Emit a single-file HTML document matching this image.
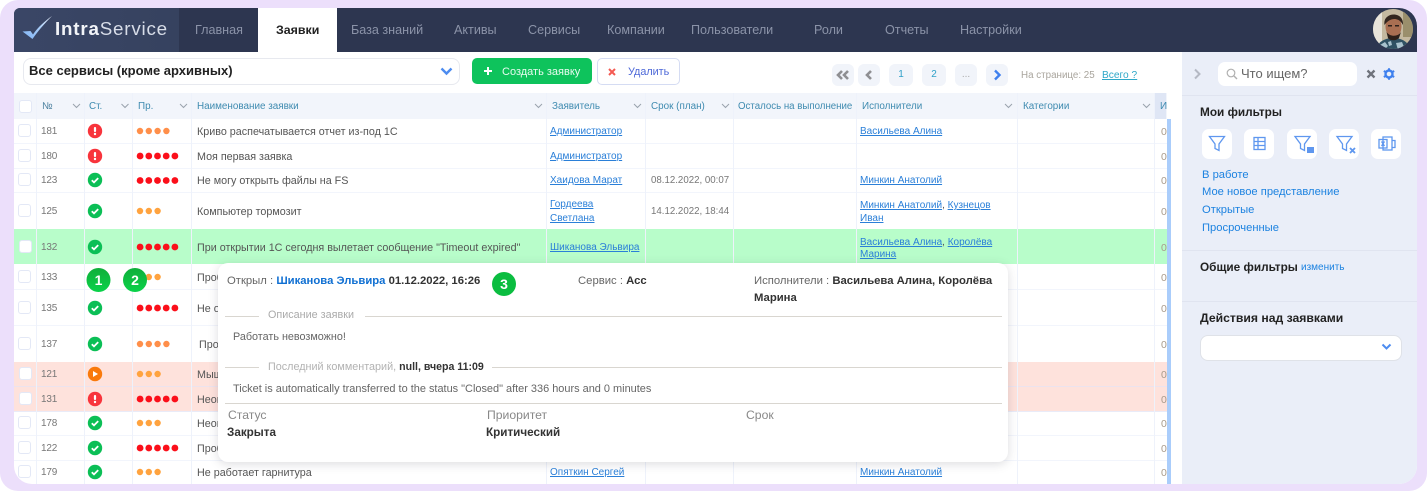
<!DOCTYPE html>
<html lang="ru"><head><meta charset="utf-8"><title>IntraService</title>
<style>
html,body{margin:0;padding:0;width:1427px;height:491px;overflow:hidden;background:#fff}
body{font-family:"Liberation Sans","Noto Sans CJK SC",sans-serif;color:#555}
#outer{position:absolute;left:0;top:0;width:1427px;height:491px;background:#ecdffb;border-radius:18px}
#app{position:absolute;left:14px;top:8px;width:1403px;height:476px;background:#fff;border-radius:6px 18px 18px 18px;overflow:hidden}
#p{position:absolute;left:-14px;top:-8px;width:1427px;height:491px}
.b{position:absolute}
.t{position:absolute;white-space:nowrap;line-height:14px;font-size:10.75px;color:#555;margin-top:1px}
.n{color:#8b93a8;font-size:12.6px;margin-top:0}
.h{color:#3f8bb0;font-size:9.9px;margin-top:1.5px}
.a{color:#2a7fd8;text-decoration:underline;font-size:10px}
.d{color:#777;font-size:9.7px}
.num{color:#777;font-size:10px;letter-spacing:-.2px}
.z{color:#a89a8a;font-size:10.5px}
.hd{color:#222;font-weight:bold;font-size:12.2px;margin-top:0}
.l{color:#1c82e0;font-size:11.2px}
.pg{position:absolute;top:64px;height:22px;background:#f1f4fa;border-radius:6px;text-align:center;line-height:22px;font-size:10px;color:#2fa0c8}
.fb{position:absolute;top:129px;width:30px;height:30px;background:#fff;border-radius:7px}
.ln{position:absolute;background:#d9d6d0;height:1px}
.pt{position:absolute;white-space:nowrap;line-height:16px;color:#666;font-size:11.3px}
.pt b{color:#333}
.cb{position:absolute;left:18px;width:11px;height:11px;border:1px solid #e3e8f6;border-radius:3px;background:#fff}
</style></head><body>
<div id="outer"></div>
<div id="app"><div id="p">

<!-- header -->
<div class="b" style="left:14px;top:8px;width:1403px;height:44px;background:#2d3650"></div>
<div class="b" style="left:14px;top:8px;width:165px;height:44px;background:linear-gradient(90deg,#3a4666,#36425f)"></div>
<svg class="b" style="left:20px;top:14px" width="36" height="28" viewBox="0 0 36 28"><defs><linearGradient id="g1" x1="0" y1="1" x2="1" y2="0"><stop offset="0" stop-color="#7fb3f5"/><stop offset=".55" stop-color="#a9cdf7"/><stop offset="1" stop-color="#f2f6ff"/></linearGradient></defs><path d="M2.5 17.5 L10.5 17 L13 20.5 C18 13 25 7 32 2 C25 9 18 17 12.5 25 Z" fill="url(#g1)"/></svg>
<div class="t" style="left:55px;top:19px;margin-top:0;line-height:20px;font-size:18.8px;color:#f2f4f8;letter-spacing:.8px"><b>Intra</b><span style="color:#d8dde8">Service</span></div>
<div class="b" style="left:258px;top:8px;width:79px;height:44px;background:#fff"></div>
<div class="t n" style="left:195px;top:23px">Главная</div>
<div class="t" style="left:276px;top:23px;margin-top:0;font-size:12.4px;font-weight:bold;color:#222">Заявки</div>
<div class="t n" style="left:351px;top:23px">База знаний</div>
<div class="t n" style="left:454px;top:23px">Активы</div>
<div class="t n" style="left:528px;top:23px">Сервисы</div>
<div class="t n" style="left:607px;top:23px">Компании</div>
<div class="t n" style="left:691px;top:23px">Пользователи</div>
<div class="t n" style="left:814px;top:23px">Роли</div>
<div class="t n" style="left:885px;top:23px">Отчеты</div>
<div class="t n" style="left:960px;top:23px">Настройки</div>
<svg class="b" style="left:1372px;top:9px" width="42" height="42" viewBox="0 0 42 42"><defs><clipPath id="av"><circle cx="21" cy="20" r="20"/></clipPath></defs><g clip-path="url(#av)"><rect width="42" height="42" fill="#c4b9a0"/><rect x="0" width="10" height="42" fill="#e8e4da"/><rect x="31" width="11" height="28" fill="#9a8f6c"/><path d="M3 42 C5 33 13 29 21 29 C30 29 37 33 39 42 Z" fill="#2f5163"/><path d="M8 36 l5 -3 l3 4 l-4 4z M24 34 l6 -1 l2 5 l-6 3z M16 33 l3 -1 l1 4 l-3 1z" fill="#a9c2cd"/><ellipse cx="21.500" cy="17.500" rx="8" ry="11" fill="#a96f52"/><path d="M12.500 16 C10 3 32 1 31 16 C27 8 18 8 12.500 16 Z" fill="#33261f"/><path d="M14.500 23 C18 28 26 28 29 23 L27 29 C24 32 18 32 16 29 Z" fill="#2e211b"/><rect x="16" y="16" width="4" height="1.500" fill="#2e211b"/><rect x="23" y="16" width="4" height="1.500" fill="#2e211b"/></g></svg>

<!-- toolbar -->
<div class="b" style="left:23px;top:58px;width:435px;height:25px;border:1px solid #e7e9ef;border-radius:8px;background:#fff"></div>
<div class="t" style="left:29px;top:63px;font-size:13px;font-weight:bold;color:#222">Все сервисы (кроме архивных)</div>
<svg class="b" style="left:440px;top:67px" width="13" height="9" viewBox="0 0 13 9"><path d="M1.500 1.500 L6.500 6.500 L11.500 1.500" fill="none" stroke="#4d8cf0" stroke-width="2.400"/></svg>
<div class="b" style="left:472px;top:58px;width:120px;height:26px;background:#0ec35c;border-radius:5px"></div>
<svg class="b" style="left:483px;top:66px" width="10" height="10"><path d="M5 1 V9 M1 5 H9" stroke="#fff" stroke-width="2"/></svg>
<div class="t" style="left:502px;top:64px;font-size:11px;color:#e8fbef">Создать заявку</div>
<div class="b" style="left:597px;top:58px;width:81px;height:25px;background:#fff;border:1px solid #d5dcf3;border-radius:5px"></div>
<svg class="b" style="left:608px;top:68px" width="8" height="8"><path d="M1 1 L7 7 M7 1 L1 7" stroke="#f45a52" stroke-width="2"/></svg>
<div class="t" style="left:628px;top:64px;font-size:10.800px;color:#4d68d8">Удалить</div>
<div class="pg" style="left:832px;width:22px"><svg style="position:absolute;left:4px;top:6px" width="14" height="10"><path d="M6 1 L2 5 L6 9 M12 1 L8 5 L12 9" fill="none" stroke="#8f8f92" stroke-width="2.600"/></svg></div>
<div class="pg" style="left:858px;width:22px"><svg style="position:absolute;left:7px;top:6px" width="8" height="10"><path d="M6 1 L2 5 L6 9" fill="none" stroke="#8f8f92" stroke-width="2.600"/></svg></div>
<div class="pg" style="left:889px;width:24px">1</div>
<div class="pg" style="left:922px;width:24px">2</div>
<div class="pg" style="left:955px;width:22px;color:#aaa">...</div>
<div class="pg" style="left:986px;width:22px"><svg style="position:absolute;left:7px;top:5px" width="9" height="12"><path d="M2 1.500 L6.500 6 L2 10.500" fill="none" stroke="#3f80ee" stroke-width="2.400"/></svg></div>
<div class="t" style="left:1021px;top:68px;font-size:9.800px;color:#a9a59d">На странице: 25</div>
<div class="t" style="left:1102px;top:68px;font-size:10.200px;color:#2fa8c8;text-decoration:underline">Всего ?</div>

<!-- table background -->
<div class="b" style="left:14px;top:93px;width:1153px;height:26px;background:#f2f5fb"></div>
<div class="b" style="left:1155px;top:93px;width:11px;height:26px;background:#dfe6f5"></div>
<div class="b" style="left:14px;top:229px;width:1153px;height:35px;background:#b8fdca"></div>
<div class="b" style="left:14px;top:362px;width:1153px;height:49px;background:#fee2dc"></div>
<!-- row lines -->
<div class="b" style="left:14px;top:143px;width:1153px;height:1px;background:#f2f5fc"></div>
<div class="b" style="left:14px;top:168px;width:1153px;height:1px;background:#f2f5fc"></div>
<div class="b" style="left:14px;top:192px;width:1153px;height:1px;background:#f2f5fc"></div>
<div class="b" style="left:14px;top:289px;width:1153px;height:1px;background:#f2f5fc"></div>
<div class="b" style="left:14px;top:325px;width:1153px;height:1px;background:#f2f5fc"></div>
<div class="b" style="left:14px;top:386px;width:1153px;height:1px;background:#ece3ee"></div>
<div class="b" style="left:14px;top:411px;width:1153px;height:1px;background:#e9ebf8"></div>
<div class="b" style="left:14px;top:435px;width:1153px;height:1px;background:#f2f5fc"></div>
<div class="b" style="left:14px;top:460px;width:1153px;height:1px;background:#f2f5fc"></div>
<!-- col lines -->
<div class="b" style="left:36px;top:93px;width:1px;height:391px;background:#eef2fb"></div>
<div class="b" style="left:84px;top:93px;width:1px;height:391px;background:#eef2fb"></div>
<div class="b" style="left:132px;top:93px;width:1px;height:391px;background:#eef2fb"></div>
<div class="b" style="left:191px;top:93px;width:1px;height:391px;background:#eef2fb"></div>
<div class="b" style="left:546px;top:93px;width:1px;height:391px;background:#eef2fb"></div>
<div class="b" style="left:645px;top:93px;width:1px;height:391px;background:#eef2fb"></div>
<div class="b" style="left:733px;top:93px;width:1px;height:391px;background:#eef2fb"></div>
<div class="b" style="left:856px;top:93px;width:1px;height:391px;background:#eef2fb"></div>
<div class="b" style="left:1017px;top:93px;width:1px;height:391px;background:#eef2fb"></div>
<div class="b" style="left:1154px;top:93px;width:1px;height:391px;background:#eef2fb"></div>
<!-- scrollbar -->
<div class="b" style="left:1167px;top:119px;width:4px;height:365px;background:#aacdfb"></div>

<!-- header cells -->
<div class="cb" style="top:100px;left:19px"></div>
<div class="t h" style="left:42px;top:98px;color:#4a7f9e">№</div>
<div class="t h" style="left:89px;top:98px">Ст.</div>
<div class="t h" style="left:138px;top:98px">Пр.</div>
<div class="t h" style="left:197px;top:98px">Наименование заявки</div>
<div class="t h" style="left:552px;top:98px">Заявитель</div>
<div class="t h" style="left:651px;top:98px">Срок (план)</div>
<div class="t h" style="left:738px;top:98px;font-size:9.700px">Осталось на выполнение</div>
<div class="t h" style="left:862px;top:98px">Исполнители</div>
<div class="t h" style="left:1023px;top:98px">Категории</div>
<div class="t h" style="left:1160px;top:98px">И</div>
<svg class="b" style="left:0;top:100px" width="1160" height="12" fill="none" stroke="#9aa3ad" stroke-width="1"><path d="M73 4 l3.500 3.500 l3.500 -3.500 M121.500 4 l3.500 3.500 l3.500 -3.500 M180 4 l3.500 3.500 l3.500 -3.500 M535 4 l3.500 3.500 l3.500 -3.500 M634 4 l3.500 3.500 l3.500 -3.500 M722 4 l3.500 3.500 l3.500 -3.500 M1005 4 l3.500 3.500 l3.500 -3.500 M1143 4 l3.500 3.500 l3.500 -3.500"/></svg>

<!-- checkboxes -->
<div class="cb" style="top:124px"></div>
<div class="cb" style="top:149px"></div>
<div class="cb" style="top:173px"></div>
<div class="cb" style="top:204px"></div>
<div class="cb" style="top:240px;left:19px"></div>
<div class="cb" style="top:270px"></div>
<div class="cb" style="top:301px"></div>
<div class="cb" style="top:337px"></div>
<div class="cb" style="top:367px;left:19px"></div>
<div class="cb" style="top:392px;left:19px"></div>
<div class="cb" style="top:416px"></div>
<div class="cb" style="top:441px"></div>
<div class="cb" style="top:465px"></div>

<!-- numbers -->
<div class="t num" style="left:41px;top:124px">181</div>
<div class="t num" style="left:41px;top:149px">180</div>
<div class="t num" style="left:41px;top:173px">123</div>
<div class="t num" style="left:41px;top:204px">125</div>
<div class="t num" style="left:41px;top:240px">132</div>
<div class="t num" style="left:41px;top:270px">133</div>
<div class="t num" style="left:41px;top:301px">135</div>
<div class="t num" style="left:41px;top:337px">137</div>
<div class="t num" style="left:41px;top:367px">121</div>
<div class="t num" style="left:41px;top:392px">131</div>
<div class="t num" style="left:41px;top:416px">178</div>
<div class="t num" style="left:41px;top:441px">122</div>
<div class="t num" style="left:41px;top:465px">179</div>

<!-- status + priority icons -->
<svg class="b" style="left:0;top:0" width="200" height="491">
<defs>
<g id="ok"><circle r="7.200" fill="#0bbf56"/><path d="M-3.200 .2 L-1 2.400 L3.200 -1.900" fill="none" stroke="#fff" stroke-width="1.800"/></g>
<g id="er"><circle r="7.200" fill="#f8343c"/><rect x="-1.100" y="-4" width="2.200" height="5" rx="1" fill="#fff"/><circle cy="3" r="1.200" fill="#fff"/></g>
<g id="pl"><circle r="7.200" fill="#f97a0c"/><path d="M-2 -3 L3 0 L-2 3 Z" fill="#fff"/></g>
<g id="r5" fill="#fb0f1a"><circle cx="140.100" r="3.400"/><circle cx="148.800" r="3.400"/><circle cx="157.500" r="3.400"/><circle cx="166.200" r="3.400"/><circle cx="174.900" r="3.400"/></g>
<g id="o4" fill="#ff8f4a"><circle cx="140" r="3.200"/><circle cx="148.800" r="3.200"/><circle cx="157.600" r="3.200"/><circle cx="166.400" r="3.200"/></g>
<g id="o3" fill="#ffa33f"><circle cx="140" r="3.200"/><circle cx="148.800" r="3.200"/><circle cx="157.600" r="3.200"/></g>
</defs>
<use href="#er" x="95" y="131"/><use href="#er" x="95" y="156"/><use href="#ok" x="95" y="180"/><use href="#ok" x="95" y="211"/><use href="#ok" x="95" y="247"/><use href="#ok" x="95" y="308"/><use href="#ok" x="95" y="344"/><use href="#pl" x="95" y="374"/><use href="#er" x="95" y="399"/><use href="#ok" x="95" y="423"/><use href="#ok" x="95" y="448"/><use href="#ok" x="95" y="472"/>
<use href="#o4" y="131"/><use href="#r5" y="156"/><use href="#r5" y="180.500"/><use href="#o3" y="211"/><use href="#r5" y="247"/><use href="#o3" y="277"/><use href="#r5" y="308"/><use href="#o4" y="344"/><use href="#o3" y="374"/><use href="#r5" y="399"/><use href="#o3" y="423"/><use href="#r5" y="448"/><use href="#o3" y="472"/>
</svg>

<!-- names -->
<div class="t" style="left:197px;top:124px">Криво распечатывается отчет из-под 1С</div>
<div class="t" style="left:197px;top:149px">Моя первая заявка</div>
<div class="t" style="left:197px;top:173px">Не могу открыть файлы на FS</div>
<div class="t" style="left:197px;top:204px">Компьютер тормозит</div>
<div class="t" style="left:197px;top:240px">При открытии 1С сегодня вылетает сообщение "Timeout expired"</div>
<div class="t" style="left:197px;top:270px">Проблема</div>
<div class="t" style="left:197px;top:301px">Не открывается</div>
<div class="t" style="left:199px;top:337px">Проблема</div>
<div class="t" style="left:197px;top:367px">Мышка</div>
<div class="t" style="left:197px;top:392px">Неопознанная</div>
<div class="t" style="left:197px;top:416px">Неопознанная</div>
<div class="t" style="left:197px;top:441px">Проблема</div>
<div class="t" style="left:197px;top:465px">Не работает гарнитура</div>

<!-- applicants -->
<div class="t a" style="left:550px;top:124px">Администратор</div>
<div class="t a" style="left:550px;top:149px">Администратор</div>
<div class="t a" style="left:550px;top:173px">Хаидова Марат</div>
<div class="t a" style="left:550px;top:197px">Гордеева</div>
<div class="t a" style="left:550px;top:211px">Светлана</div>
<div class="t a" style="left:550px;top:240px">Шиканова Эльвира</div>
<div class="t a" style="left:550px;top:465px">Опяткин Сергей</div>

<!-- dates -->
<div class="t d" style="left:651px;top:173px">08.12.2022, 00:07</div>
<div class="t d" style="left:651px;top:204px">14.12.2022, 18:44</div>

<!-- performers -->
<div class="t a" style="left:860px;top:124px">Васильева Алина</div>
<div class="t a" style="left:860px;top:173px">Минкин Анатолий</div>
<div class="t" style="left:860px;top:197px"><span class="a">Минкин Анатолий</span><span style="font-size:10px">, </span><span class="a">Кузнецов</span></div>
<div class="t a" style="left:860px;top:211px">Иван</div>
<div class="t" style="left:860px;top:234px"><span class="a">Васильева Алина</span><span style="font-size:10px">, </span><span class="a">Королёва</span></div>
<div class="t a" style="left:860px;top:247px">Марина</div>
<div class="t a" style="left:860px;top:465px">Минкин Анатолий</div>

<!-- last col -->
<div class="t z" style="left:1161px;top:124px">0</div>
<div class="t z" style="left:1161px;top:149px">0</div>
<div class="t z" style="left:1161px;top:173px">0</div>
<div class="t z" style="left:1161px;top:204px">0</div>
<div class="t z" style="left:1161px;top:240px">0</div>
<div class="t z" style="left:1161px;top:270px">0</div>
<div class="t z" style="left:1161px;top:301px">0</div>
<div class="t z" style="left:1161px;top:337px">0</div>
<div class="t z" style="left:1161px;top:367px">0</div>
<div class="t z" style="left:1161px;top:392px">0</div>
<div class="t z" style="left:1161px;top:416px">0</div>
<div class="t z" style="left:1161px;top:441px">0</div>
<div class="t z" style="left:1161px;top:465px">0</div>

<!-- sidebar -->
<div class="b" style="left:1182px;top:52px;width:235px;height:432px;background:#eaeef8"></div>
<div class="b" style="left:1182px;top:95px;width:235px;height:1px;background:#e0e4f0"></div>
<div class="b" style="left:1182px;top:250px;width:235px;height:1px;background:#e0e4f0"></div>
<div class="b" style="left:1182px;top:301px;width:235px;height:1px;background:#e0e4f0"></div>
<svg class="b" style="left:1193px;top:68px" width="9" height="12"><path d="M2 1.500 L6.500 6 L2 10.500" fill="none" stroke="#b5b9c4" stroke-width="2"/></svg>
<div class="b" style="left:1218px;top:62px;width:139px;height:24px;background:#fff;border-radius:7px"></div>
<svg class="b" style="left:1226px;top:68px" width="12" height="12"><circle cx="5" cy="5" r="3.800" fill="none" stroke="#b0b0b0" stroke-width="1.200"/><path d="M8 8 L11 11" stroke="#b0b0b0" stroke-width="1.400"/></svg>
<div class="t" style="left:1241px;top:66px;font-size:13px;color:#666">Что ищем?</div>
<svg class="b" style="left:1366px;top:69px" width="10" height="10"><path d="M1.500 1.500 L8.500 8.500 M8.500 1.500 L1.500 8.500" stroke="#6f737c" stroke-width="2.300"/></svg>
<svg class="b" style="left:1383px;top:68px" width="12" height="12" viewBox="0 0 12 12"><circle cx="6" cy="6" r="3.500" fill="none" stroke="#3f80ee" stroke-width="2.400"/><path d="M6 .3 V2.500 M6 9.500 V11.700 M.8 3 L2.800 4.100 M9.200 7.900 L11.200 9 M.8 9 L2.800 7.900 M9.200 4.100 L11.200 3" stroke="#3f80ee" stroke-width="2"/></svg>
<div class="t hd" style="left:1200px;top:105px;font-size:11.800px">Мои фильтры</div>
<div class="fb" style="left:1202px"></div><div class="fb" style="left:1244px"></div><div class="fb" style="left:1287px"></div><div class="fb" style="left:1329px"></div><div class="fb" style="left:1371px"></div>
<svg class="b" style="left:1200px;top:128px" width="205" height="32" fill="none" stroke="#5f97ef" stroke-width="1.300">
<path d="M9.500 8.500 H24.500 L19 16 V22.500 L15 20.500 V16 Z"/>
<rect x="54" y="9.500" width="11" height="12"/><path d="M54 13.500 H65 M54 17.500 H65 M58 9.500 V21.500"/>
<path d="M95 8.500 H110 L104.500 16 V22.500 L100.500 20.500 V16 Z"/><rect x="107" y="19" width="7" height="6" fill="#5f97ef" stroke="none"/>
<path d="M137 8.500 H152 L146.500 16 V22.500 L142.500 20.500 V16 Z"/><path d="M150 20 L155 25 M155 20 L150 25" stroke-width="1.800"/>
<rect x="183" y="9" width="9" height="13" /><rect x="179" y="11.500" width="8" height="8.500"/><path d="M192 12.500 H195 V19.500 H192 M181.500 13.500 L184.500 18 M184.500 13.500 L181.500 18"/>
</svg>
<div class="t l" style="left:1202px;top:167px">В работе</div>
<div class="t l" style="left:1202px;top:184px">Мое новое представление</div>
<div class="t l" style="left:1202px;top:202px">Открытые</div>
<div class="t l" style="left:1202px;top:220px">Просроченные</div>
<div class="t hd" style="left:1200px;top:260px;font-size:11.800px">Общие фильтры</div>
<div class="t l" style="left:1301px;top:260px;font-size:10px">изменить</div>
<div class="t hd" style="left:1200px;top:311px">Действия над заявками</div>
<div class="b" style="left:1200px;top:335px;width:200px;height:24px;background:#fff;border:1px solid #dfe2e8;border-radius:8px"></div>
<svg class="b" style="left:1381px;top:343px" width="11" height="8"><path d="M1.500 1.500 L5.500 5.500 L9.500 1.500" fill="none" stroke="#4d8cf0" stroke-width="2"/></svg>

<!-- badges 1,2 -->
<svg class="b" style="left:0;top:0" width="560" height="320" font-family="Liberation Sans" font-weight="bold" font-size="14" fill="#fff" text-anchor="middle">
<defs><linearGradient id="bg" x1="0" y1="0" x2="0" y2="1"><stop offset="0" stop-color="#0fae3a"/><stop offset="1" stop-color="#0ad24a"/></linearGradient></defs>
<circle cx="98.500" cy="280" r="12" fill="url(#bg)"/><text x="98.500" y="285">1</text>
<circle cx="135" cy="280" r="12" fill="url(#bg)"/><text x="135" y="285">2</text>
</svg>

<!-- popover -->
<div class="b" style="left:218px;top:263px;width:790px;height:199px;background:#fff;border-radius:10px;box-shadow:0 2px 10px rgba(60,60,80,.18)"></div>
<div class="pt" style="left:227px;top:273px">Открыл : <b style="color:#0f6fd2">Шиканова Эльвира</b> <b>01.12.2022, 16:26</b></div>
<svg class="b" style="left:492px;top:272px" width="24" height="24" font-family="Liberation Sans" font-weight="bold" font-size="14" fill="#fff" text-anchor="middle"><circle cx="12" cy="12" r="12" fill="#0bbd40"/><text x="12" y="17">3</text></svg>
<div class="pt" style="left:578px;top:273px">Сервис : <b>Асс</b></div>
<div class="pt" style="left:754px;top:273px">Исполнители : <b>Васильева Алина, Королёва</b></div>
<div class="pt" style="left:754px;top:290px"><b>Марина</b></div>
<div class="ln" style="left:225px;top:316px;width:34px"></div>
<div class="pt" style="left:268px;top:307px;color:#aaa;font-size:10.800px">Описание заявки</div>
<div class="ln" style="left:365px;top:316px;width:637px"></div>
<div class="pt" style="left:233px;top:329px;font-size:10.800px">Работать невозможно!</div>
<div class="ln" style="left:225px;top:367px;width:34px"></div>
<div class="pt" style="left:268px;top:359px;color:#b2b2b2;font-size:10.800px">Последний комментарий, <b style="color:#333;font-size:10.600px">null, вчера 11:09</b></div>
<div class="ln" style="left:492px;top:367px;width:510px"></div>
<div class="pt" style="left:233px;top:381px;font-size:10.950px">Ticket is automatically transferred to the status "Closed" after 336 hours and 0 minutes</div>
<div class="ln" style="left:225px;top:403px;width:777px"></div>
<div class="pt" style="left:228px;top:407px;font-size:12.200px;color:#888">Статус</div>
<div class="pt" style="left:487px;top:407px;font-size:12.200px;color:#888">Приоритет</div>
<div class="pt" style="left:746px;top:407px;font-size:12.200px;color:#888">Срок</div>
<div class="pt" style="left:227px;top:425px;font-size:11.700px;color:#333;font-weight:bold">Закрыта</div>
<div class="pt" style="left:486px;top:425px;font-size:11.700px;color:#333;font-weight:bold">Критический</div>

</div></div>
</body></html>
